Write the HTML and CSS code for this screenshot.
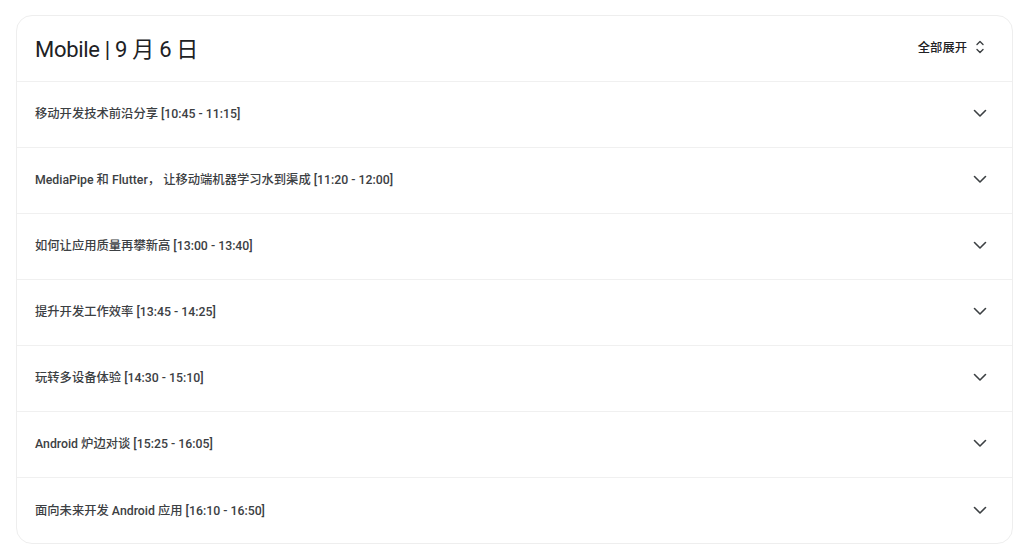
FILE: index.html
```html
<!DOCTYPE html>
<html lang="zh-CN">
<head>
<meta charset="utf-8">
<link rel="stylesheet" href="styles.css">
</head>
<body>
<div class="card">
  <div class="header">
    <h1 class="title">Mobile | 9 月 6 日</h1>
    <button class="expand-all">全部展开
      <svg class="icon" width="24" height="24" viewBox="0 0 24 24"><path d="M9 9.5 12 6.5l3 3M9 14.5 12 17.5l3-3" fill="none" stroke="#3c4043" stroke-width="1.4" stroke-linecap="round" stroke-linejoin="round"/></svg>
    </button>
  </div>
  <ul class="list">
    <li class="row"><span class="label">移动开发技术前沿分享 [10:45 - 11:15]</span><svg class="chev" width="24" height="24" viewBox="0 0 24 24"><path d="M6.5 9.5 12 15l5.5-5.5" fill="none" stroke="#3c4043" stroke-width="1.6" stroke-linecap="round" stroke-linejoin="round"/></svg></li>
    <li class="row"><span class="label">MediaPipe 和 Flutter， 让移动端机器学习水到渠成 [11:20 - 12:00]</span><svg class="chev" width="24" height="24" viewBox="0 0 24 24"><path d="M6.5 9.5 12 15l5.5-5.5" fill="none" stroke="#3c4043" stroke-width="1.6" stroke-linecap="round" stroke-linejoin="round"/></svg></li>
    <li class="row"><span class="label">如何让应用质量再攀新高 [13:00 - 13:40]</span><svg class="chev" width="24" height="24" viewBox="0 0 24 24"><path d="M6.5 9.5 12 15l5.5-5.5" fill="none" stroke="#3c4043" stroke-width="1.6" stroke-linecap="round" stroke-linejoin="round"/></svg></li>
    <li class="row"><span class="label">提升开发工作效率 [13:45 - 14:25]</span><svg class="chev" width="24" height="24" viewBox="0 0 24 24"><path d="M6.5 9.5 12 15l5.5-5.5" fill="none" stroke="#3c4043" stroke-width="1.6" stroke-linecap="round" stroke-linejoin="round"/></svg></li>
    <li class="row"><span class="label">玩转多设备体验 [14:30 - 15:10]</span><svg class="chev" width="24" height="24" viewBox="0 0 24 24"><path d="M6.5 9.5 12 15l5.5-5.5" fill="none" stroke="#3c4043" stroke-width="1.6" stroke-linecap="round" stroke-linejoin="round"/></svg></li>
    <li class="row"><span class="label">Android 炉边对谈 [15:25 - 16:05]</span><svg class="chev" width="24" height="24" viewBox="0 0 24 24"><path d="M6.5 9.5 12 15l5.5-5.5" fill="none" stroke="#3c4043" stroke-width="1.6" stroke-linecap="round" stroke-linejoin="round"/></svg></li>
    <li class="row"><span class="label">面向未来开发 Android 应用 [16:10 - 16:50]</span><svg class="chev" width="24" height="24" viewBox="0 0 24 24"><path d="M6.5 9.5 12 15l5.5-5.5" fill="none" stroke="#3c4043" stroke-width="1.6" stroke-linecap="round" stroke-linejoin="round"/></svg></li>
  </ul>
</div>
</body>
</html>
```
FILE: styles.css
```css
html, body {
  margin: 0;
  padding: 0;
  background: #ffffff;
}
body {
  font-family: "Roboto", "Noto Sans CJK SC", sans-serif;
  color: #3c4043;
  padding: 15px 11px 0 16px;
}
.card {
  border: 1px solid #eeeeee;
  border-radius: 16px;
  box-sizing: border-box;
  height: 529px;
  overflow: hidden;
}
.header {
  height: 66px;
  box-sizing: border-box;
  display: flex;
  align-items: center;
  justify-content: space-between;
  padding: 0 20px 3px 18px;
  border-bottom: 1px solid #f0f0f0;
}
.title {
  margin: 0;
  font-size: 22px;
  font-weight: 400;
  color: #202124;
  letter-spacing: -0.3px;
}
.expand-all {
  display: flex;
  align-items: center;
  gap: 1px;
  background: none;
  border: 0;
  padding: 0;
  font-family: "Roboto", "Noto Sans CJK SC", sans-serif;
  font-size: 12.3px;
  font-weight: 500;
  color: #202124;
}
.list {
  list-style: none;
  margin: 0;
  padding: 0;
}
.row {
  height: 66px;
  box-sizing: border-box;
  display: flex;
  align-items: center;
  justify-content: space-between;
  padding: 0 20px 3px 18px;
  border-bottom: 1px solid #f0f0f0;
}
.row:last-child {
  border-bottom: 0;
}
.label {
  font-size: 12.3px;
  font-weight: 500;
  color: #3c4043;
}
.chev {
  display: block;
}
```
